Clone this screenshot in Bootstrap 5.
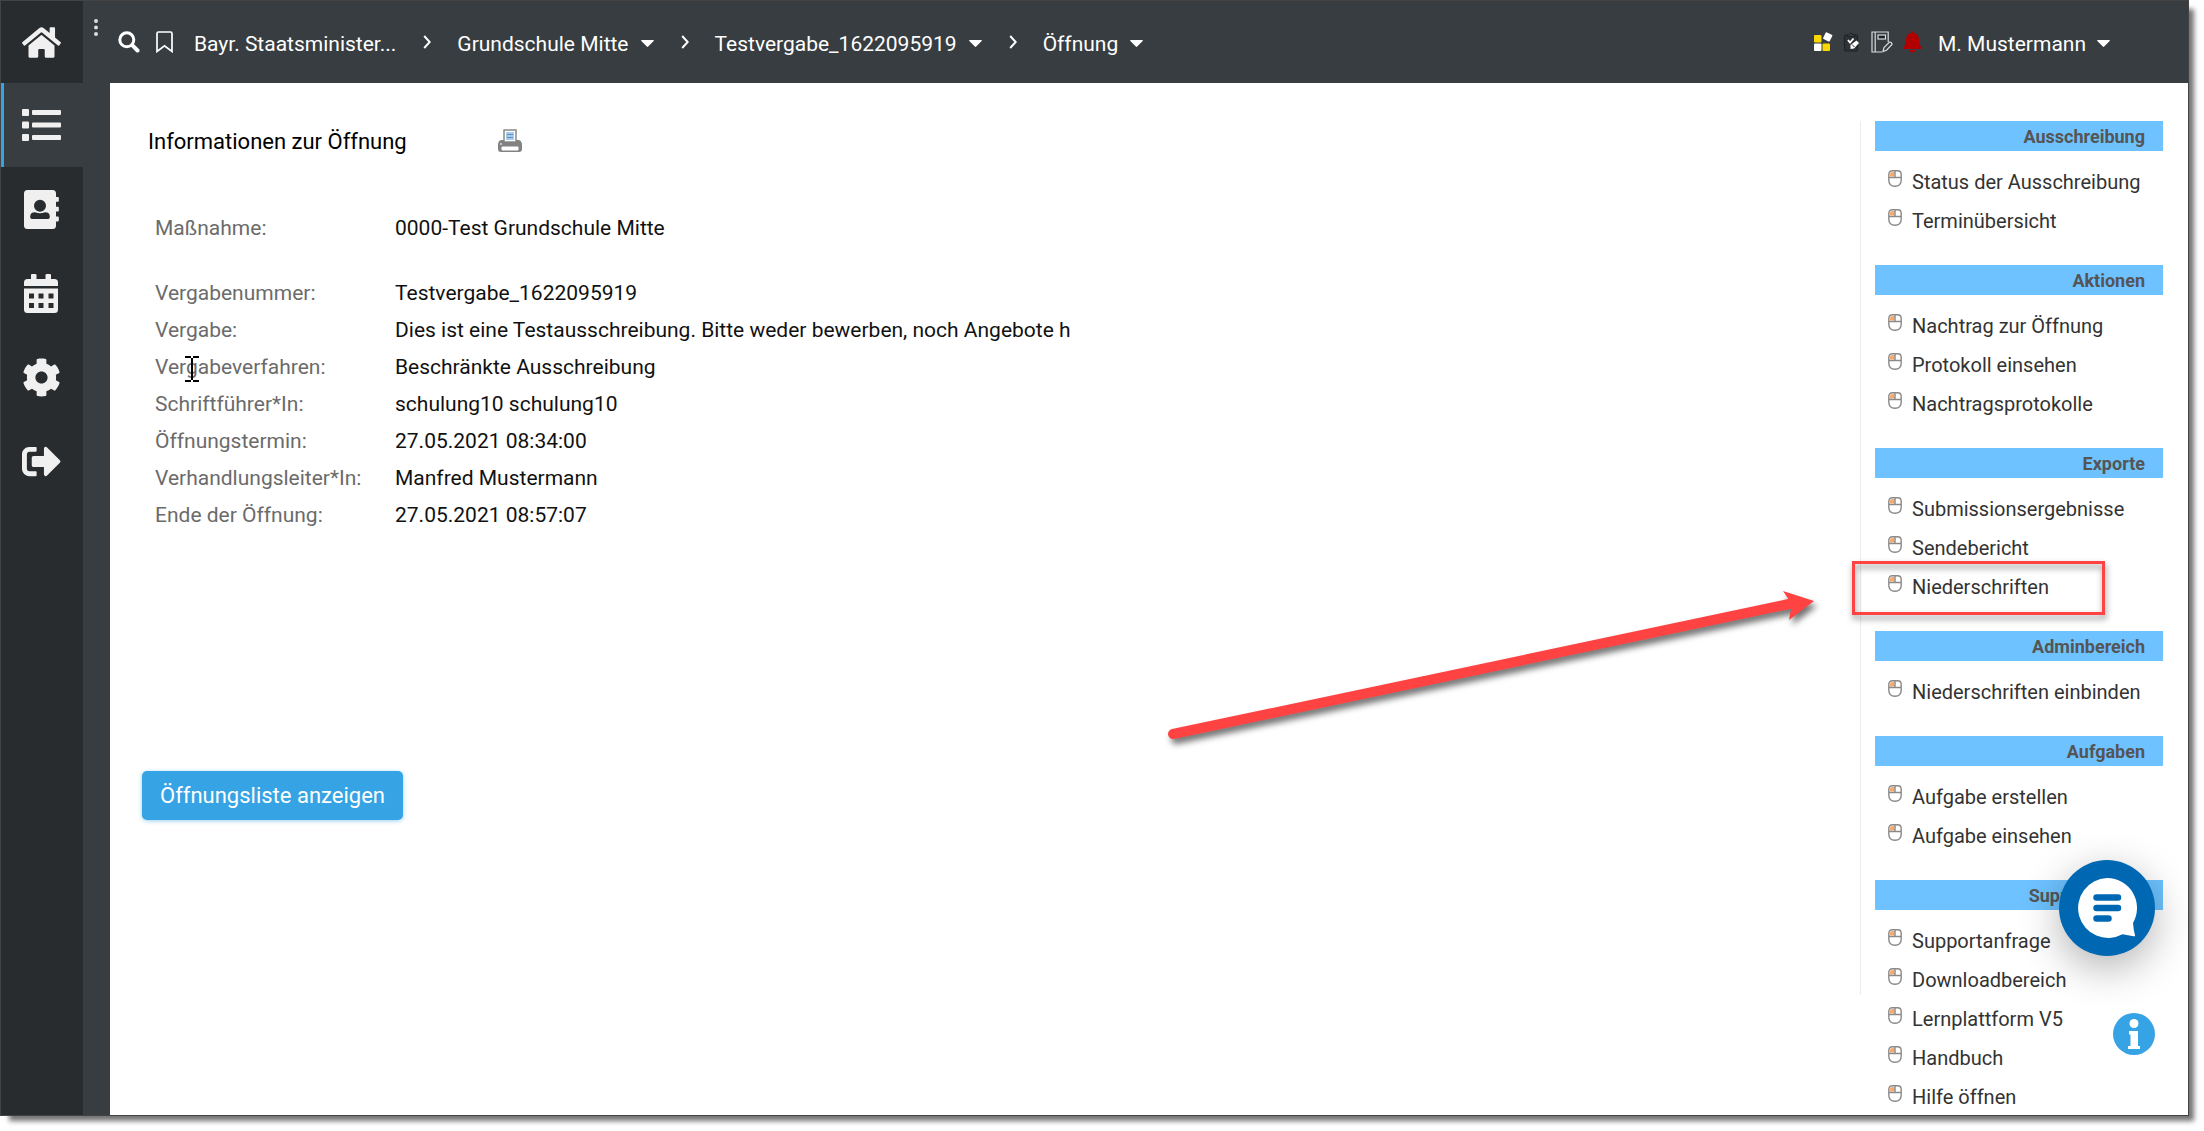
<!DOCTYPE html>
<html lang="de">
<head>
<meta charset="utf-8">
<meta name="viewport" content="width=device-width, initial-scale=1">
<title>Öffnung</title>
<link href="https://cdn.jsdelivr.net/npm/bootstrap@5.3.0/dist/css/bootstrap.min.css" rel="stylesheet">
<style>
  body { font-family: Roboto, "Liberation Sans", sans-serif; font-size: 21px; line-height: 25px; color: #111; background: #fff; padding: 0 15px 15px 0; overflow: hidden; }
  a { color: inherit; text-decoration: none; }
  svg { display: block; flex: none; }
  .app-frame { height: calc(100vh - 15px); border: 1px solid #434343; box-shadow: 7px 7px 5px -2px rgba(0,0,0,.55); background: #fff; overflow: hidden; }
  .side-nav { width: 82px; background: #282c2e; color: #f0f0f0; }
  .side-nav a { height: 84px; padding-right: 2px; }
  .side-nav a:first-child { height: 82px; }
  .side-nav a.is-current { background: #373d40; border-left: 3px solid #36a3e5; padding-right: 5px; }
  .side-gutter { width: 27px; background: #373d40; }
  .top-bar { height: 82px; background: #373d40; color: #fff; padding: 0 78px 0 11px; }
  .menu-dots { margin: 18px 20px 0 0; }
  .plain-btn { background: none; border: 0; padding: 0; color: inherit; font: inherit; }
  .crumb-nav { padding-left: 21px; }
  .crumb-sep { margin: 0 26px 0 27px; }
  .crumb-item { gap: 12px; padding-top: 5px; }
  .crumb-item svg { margin-bottom: 2px; }
  .user-menu { gap: 11px; }
  .tool-icons { gap: 10px; }
  .work-area { padding: 38px 25px 0 0; }
  .info-col { border-right: 1px solid #ececec; padding: 8px 0 175px 32px; }
  .info-title { font-size: 22px; line-height: 25px; font-weight: 400; color: #000; margin: 0; width: 350px; }
  .info-head { padding-left: 6px; margin-bottom: 56px; }
  .info-grid { display: grid; grid-template-columns: 240px 1fr; line-height: 37px; padding-left: 13px; margin: 0 0 237px; }
  .info-grid dt { font-weight: 400; color: #6b6b6b; }
  .info-grid dd { margin: 0; }
  .info-grid .gap-after { margin-bottom: 28px; }
  .list-btn { background: #36a3e5; color: #fff; border: 0; border-radius: 5px; font-size: 22px; line-height: 25px; padding: 12px 18px; box-shadow: 0 1px 4px rgba(54,163,229,.5); }
  .link-col { width: 288px; margin-left: 14px; }
  .group-title { background: #6dc2ff; color: #555; font-size: 18px; font-weight: 700; line-height: 28px; padding: 2px 18px 0 0; margin: 0; text-align: right; }
  .group-links { padding: 12px 0 24px 13px; margin: 0; font-size: 20px; line-height: 39px; color: #333; }
  .group-links a { gap: 10px; }
  .group-links svg { margin-top: 7px; }
  .highlight-box { left: -36px; top: -7px; width: 253px; height: 54px; border: 3px solid #ff4343; filter: drop-shadow(1px 4px 3px rgba(0,0,0,.45)); pointer-events: none; }
  .pointer-arrow { right: 369px; top: 579px; filter: drop-shadow(3px 5px 3px rgba(0,0,0,.55)); pointer-events: none; }
  .text-cursor { left: 30px; top: 7px; }
  .chat-btn { right: 33px; bottom: 159px; width: 96px; height: 96px; border-radius: 50%; background: #0068b3; box-shadow: 0 12px 40px rgba(0,0,0,.3); }
  .help-btn { right: 33px; bottom: 60px; }
</style>
<script src="https://cdn.jsdelivr.net/npm/bootstrap@5.3.0/dist/js/bootstrap.bundle.min.js"></script>
</head>
<body>
<svg width="0" height="0" class="position-absolute" aria-hidden="true">
  <symbol id="mouse" viewBox="0 0 14 17">
    <rect x="1" y="1" width="12" height="15" rx="5" ry="5" fill="#fff"/>
    <path d="M2 6.500V4Q2 2 4.500 2H6.500V6.500Z" fill="#f9a86c"/>
    <path d="M.8 4.500Q.8.8 4.500.8h5q3.700 0 3.700 3.700V10q0 6.200-6.200 6.200T.8 10ZM.8 7.500h12.400M7 .8v6.700" fill="none" stroke="#8a8a8a" stroke-width="1.400"/>
  </symbol>
  <symbol id="caret" viewBox="0 0 13 7"><path d="M.6 0h11.800q.8.200.3.900L7.200 6.600q-.7.700-1.400 0L.3.900Q-.2.200.6 0Z" fill="currentColor"/></symbol>
  <symbol id="chevron" viewBox="0 0 8 14"><path d="M1.200 1L6.700 7 1.200 13" fill="none" stroke="currentColor" stroke-width="2"/></symbol>
</svg>

<div class="app-frame position-relative d-flex">
  <nav class="side-nav d-flex flex-column flex-shrink-0" aria-label="Hauptnavigation">
    <a href="#" class="d-flex align-items-center justify-content-center" aria-label="Startseite"><svg width="39" height="35" viewBox="0 0 576 512" fill="currentColor"><path d="M280.370 148.260L96 300.110V464a16 16 0 0 0 16 16l112.060-.29a16 16 0 0 0 15.920-16V368a16 16 0 0 1 16-16h64a16 16 0 0 1 16 16v95.640a16 16 0 0 0 16 16.050L464 480a16 16 0 0 0 16-16V300L295.670 148.260a12.190 12.190 0 0 0-15.300 0zM571.600 251.470L488 182.560V44.050a12 12 0 0 0-12-12h-56a12 12 0 0 0-12 12v72.610L318.470 43a48 48 0 0 0-61 0L4.340 251.470a12 12 0 0 0-1.600 16.900l25.500 31A12 12 0 0 0 45.150 301l235.220-193.740a12.190 12.190 0 0 1 15.300 0L530.900 301a12 12 0 0 0 16.900-1.600l25.500-31a12 12 0 0 0-1.700-16.930z"/></svg></a>
    <a href="#" class="is-current d-flex align-items-center justify-content-center" aria-label="Liste"><svg width="39" height="32" viewBox="0 0 39 32" fill="currentColor"><rect width="7" height="7" rx="1"/><rect y="12.500" width="7" height="7" rx="1"/><rect y="25" width="7" height="7" rx="1"/><rect x="10" y="1" width="29" height="5" rx="1"/><rect x="10" y="13.500" width="29" height="5" rx="1"/><rect x="10" y="26" width="29" height="5" rx="1"/></svg></a>
    <a href="#" class="d-flex align-items-center justify-content-center" aria-label="Adressbuch"><svg width="35" height="39" viewBox="0 0 35 39" fill="currentColor"><path fill-rule="evenodd" d="M3.500 0H28.500Q32 0 32 3.500V7h2q.8 0 .8.800v3.200q0 .8-.8.800h-2v5h2q.8 0 .8.800v3.200q0 .8-.8.800h-2v5h2q.8 0 .8.800v3.200q0 .8-.8.800h-2V35.500Q32 39 28.500 39H3.500Q0 39 0 35.500V3.500Q0 0 3.500 0ZM16 9.700a6 6 0 1 0 0 12a6 6 0 1 0 0-12ZM11 22.200q-4.800 0-4.800 4.300v.8q0 1.700 1.700 1.700h16.200q1.700 0 1.700-1.700v-.8q0-4.300-4.800-4.300q-5 2-10 0Z"/></svg></a>
    <a href="#" class="d-flex align-items-center justify-content-center" aria-label="Kalender"><svg width="34" height="39" viewBox="0 0 34 39" fill="currentColor"><path fill-rule="evenodd" d="M0 12V8.500Q0 5 3.500 5H7V1q0-1 1-1h3.500q1 0 1 1V5h9V1q0-1 1-1H26q1 0 1 1V5h3.500Q34 5 34 8.500V12ZM0 14.500H34V35.500Q34 39 30.500 39H3.500Q0 39 0 35.500ZM5 19.500v5h5v-5ZM14.500 19.500v5h5v-5ZM24.500 19.500v5h5v-5ZM5 29v5h5v-5ZM14.500 29v5h5v-5ZM24.500 29v5h5v-5Z"/></svg></a>
    <a href="#" class="d-flex align-items-center justify-content-center" aria-label="Einstellungen"><svg width="39" height="39" viewBox="0 0 512 512" fill="currentColor"><path d="M487.400 315.700l-42.600-24.600c4.300-23.200 4.300-47 0-70.200l42.600-24.600c4.900-2.800 7.100-8.600 5.500-14-11.100-35.600-30-67.800-54.700-94.600-3.800-4.100-10-5.100-14.800-2.300L380.800 110c-17.900-15.400-38.500-27.300-60.800-35.100V25.800c0-5.600-3.900-10.500-9.400-11.700-36.700-8.200-74.300-7.800-109.200 0-5.500 1.200-9.400 6.100-9.400 11.700V75c-22.200 7.900-42.800 19.800-60.800 35.100L88.700 85.500c-4.900-2.800-11-1.900-14.800 2.300-24.700 26.700-43.600 58.900-54.700 94.600-1.700 5.400.6 11.200 5.500 14L67.300 221c-4.300 23.200-4.300 47 0 70.200l-42.600 24.600c-4.900 2.800-7.100 8.600-5.500 14 11.100 35.600 30 67.800 54.700 94.600 3.800 4.100 10 5.100 14.800 2.300l42.600-24.600c17.900 15.400 38.500 27.300 60.800 35.100v49.200c0 5.600 3.900 10.500 9.400 11.700 36.700 8.200 74.300 7.800 109.200 0 5.500-1.200 9.400-6.100 9.400-11.700v-49.200c22.200-7.900 42.800-19.800 60.800-35.100l42.600 24.600c4.900 2.800 11 1.900 14.800-2.300 24.700-26.700 43.600-58.900 54.700-94.600 1.500-5.500-.7-11.300-5.600-14.100zM256 336c-44.100 0-80-35.900-80-80s35.900-80 80-80 80 35.900 80 80-35.900 80-80 80z"/></svg></a>
    <a href="#" class="d-flex align-items-center justify-content-center" aria-label="Abmelden"><svg width="39" height="39" viewBox="0 0 512 512" fill="currentColor"><path d="M497 273L329 441c-15 15-41 4.500-41-17v-96H152c-13.300 0-24-10.700-24-24v-96c0-13.300 10.700-24 24-24h136V88c0-21.400 25.900-32 41-17l168 168c9.300 9.400 9.300 24.600 0 34zM192 436v-40c0-6.600-5.400-12-12-12H96c-17.700 0-32-14.300-32-32V160c0-17.700 14.300-32 32-32h84c6.600 0 12-5.400 12-12V76c0-6.600-5.400-12-12-12H96c-53 0-96 43-96 96v192c0 53 43 96 96 96h84c6.600 0 12-5.400 12-12z"/></svg></a>
  </nav>

  <div class="d-flex flex-column flex-grow-1">
    <header class="top-bar d-flex align-items-center flex-shrink-0">
      <button type="button" class="plain-btn menu-dots align-self-start" aria-label="Menü"><svg width="4" height="17" viewBox="0 0 4 17" fill="#ddd"><circle cx="2" cy="2" r="2"/><circle cx="2" cy="8.500" r="2"/><circle cx="2" cy="15" r="2"/></svg></button>
      <button type="button" class="plain-btn" aria-label="Suche"><svg width="22" height="22" viewBox="0 0 22 22" fill="none" stroke="currentColor"><circle cx="8.800" cy="8.800" r="7" stroke-width="3"/><path d="M14.200 14.200L19.500 19.500" stroke-width="4" stroke-linecap="round"/></svg></button>
      <a href="#" class="ms-3" aria-label="Lesezeichen"><svg width="17" height="22" viewBox="0 0 17 22" fill="none" stroke="currentColor" stroke-width="1.700"><path d="M1 2.500Q1 1 2.500 1H14.500Q16 1 16 2.500V20.500L8.500 14.800L1 20.500Z"/></svg></a>
      <nav class="crumb-nav d-flex align-items-center" aria-label="Pfad">
        <a href="#" class="crumb-item d-flex align-items-center">Bayr. Staatsminister...</a>
        <svg class="crumb-sep" width="8" height="14"><use href="#chevron"/></svg>
        <button type="button" class="plain-btn crumb-item d-flex align-items-center">Grundschule Mitte <svg width="13" height="7"><use href="#caret"/></svg></button>
        <svg class="crumb-sep" width="8" height="14"><use href="#chevron"/></svg>
        <button type="button" class="plain-btn crumb-item d-flex align-items-center">Testvergabe_1622095919 <svg width="13" height="7"><use href="#caret"/></svg></button>
        <svg class="crumb-sep" width="8" height="14"><use href="#chevron"/></svg>
        <button type="button" class="plain-btn crumb-item d-flex align-items-center">Öffnung <svg width="13" height="7"><use href="#caret"/></svg></button>
      </nav>
      <div class="tool-icons d-flex align-items-center ms-auto me-3">
        <a href="#" aria-label="Anwendungen"><svg width="20" height="20" viewBox="0 0 20 20"><rect x="1" y="3" width="7.500" height="7.500" rx="1" fill="#f8d800"/><rect x="1" y="11.500" width="7.500" height="7.500" rx="1" fill="#fff"/><rect x="9.500" y="11.500" width="7.500" height="7.500" rx="1" fill="#f8d800"/><rect x="11" y="1.200" width="7.400" height="7.400" rx="1" fill="#fff" transform="rotate(27 14.700 4.900)"/></svg></a>
        <a href="#" aria-label="Prüfungen"><svg width="18" height="20" viewBox="0 0 18 20"><path d="M3 3h10q1.500 0 1.500 1.500v13q0 1.500-1.500 1.500H3q-1.500 0-1.500-1.500v-13Q1.500 3 3 3Z" fill="#2d3235" stroke="#1f2325" stroke-width="1.200"/><path d="M4.500 4.500V2.500H6.200Q8 -.5 9.800 2.500H11.500V4.500Z" fill="#373d40" stroke="#1f2325"/><path d="M5 8l2 2.500 3.500-4" fill="none" stroke="#fff" stroke-width="1.800"/><path d="M7.500 13L13.500 8.500l2.500 2.500-5 5.500-3.500.5Z" fill="#fff"/><path d="M9 12.500l2.500 2.500" stroke="#1f2325" stroke-width="1"/></svg></a>
        <a href="#" aria-label="Notizbuch"><svg width="22" height="22" viewBox="0 0 22 22" fill="none" stroke="#d8dcde" stroke-width="1.200"><path d="M17.200 11V1H1V21h10M4.200 1V21"/><rect x="7" y="4" width="7.500" height="4" fill="#1f2325"/><path d="M12 20.500l1-4 5.500-5.500q2.500 0 2.500 2.500l-5.500 5.700Z"/></svg></a>
        <a href="#" aria-label="Meldungen"><svg width="19" height="22" viewBox="0 0 19 22" fill="#b20000"><path d="M9.500 0q1.300 0 1.300 1.800Q16 3 16 9q0 5 2.300 7 1.200 1.500-.3 2H1q-1.500-.5-.3-2Q3 14 3 9q0-6 5.200-7.200Q8.200 0 9.500 0ZM6.500 19h6q-.5 2.500-3 2.500t-3-2.500Z"/></svg></a>
      </div>
      <button type="button" class="plain-btn crumb-item user-menu d-flex align-items-center">M. Mustermann <svg width="13" height="7"><use href="#caret"/></svg></button>
    </header>

    <div class="d-flex flex-grow-1">
      <div class="side-gutter flex-shrink-0"></div>
      <main class="work-area d-flex align-items-start flex-grow-1">
        <section class="info-col flex-grow-1">
          <div class="info-head d-flex align-items-start">
            <h1 class="info-title">Informationen zur Öffnung</h1>
            <button type="button" class="plain-btn" aria-label="Drucken"><svg width="24" height="24" viewBox="0 0 24 24"><path d="M6 1h12v12H6Z" fill="#fff" stroke="#8b8b8b" stroke-width="1.500"/><path d="M8 3h8v8H8Z" fill="#a9cbee"/><path d="M9 5.500h6M9 8.500h6" stroke="#5b8fc4"/><path d="M3 11h3v2h12v-2h3q3 1 3 5v4q0 3-3 3H3q-3 0-3-3v-4q0-4 3-5Z" fill="#828282"/><rect x="3.500" y="17.500" width="17" height="4" rx="1" fill="#fff"/><circle cx="3" cy="15" r="1" fill="#ddd"/></svg></button>
          </div>
          <dl class="info-grid">
            <dt class="gap-after">Maßnahme:</dt><dd>0000-Test Grundschule Mitte</dd>
            <dt>Vergabenummer:</dt><dd>Testvergabe_1622095919</dd>
            <dt>Vergabe:</dt><dd>Dies ist eine Testausschreibung. Bitte weder bewerben, noch Angebote h</dd>
            <dt class="position-relative">Vergabeverfahren:<svg class="text-cursor position-absolute" width="14" height="26" viewBox="0 0 14 26" fill="none" stroke="#000" stroke-width="2"><path d="M0 1H6M8 1H14M0 25H6M8 25H14M7 2V24"/></svg></dt><dd>Beschränkte Ausschreibung</dd>
            <dt>Schriftführer*In:</dt><dd>schulung10 schulung10</dd>
            <dt>Öffnungstermin:</dt><dd>27.05.2021 08:34:00</dd>
            <dt>Verhandlungsleiter*In:</dt><dd>Manfred Mustermann</dd>
            <dt>Ende der Öffnung:</dt><dd>27.05.2021 08:57:07</dd>
          </dl>
          <button type="button" class="list-btn">Öffnungsliste anzeigen</button>
        </section>

        <aside class="link-col flex-shrink-0">
          <h2 class="group-title">Ausschreibung</h2>
          <ul class="group-links list-unstyled">
            <li><a href="#" class="d-flex align-items-start"><svg width="14" height="17"><use href="#mouse"/></svg>Status der Ausschreibung</a></li>
            <li><a href="#" class="d-flex align-items-start"><svg width="14" height="17"><use href="#mouse"/></svg>Terminübersicht</a></li>
          </ul>
          <h2 class="group-title">Aktionen</h2>
          <ul class="group-links list-unstyled">
            <li><a href="#" class="d-flex align-items-start"><svg width="14" height="17"><use href="#mouse"/></svg>Nachtrag zur Öffnung</a></li>
            <li><a href="#" class="d-flex align-items-start"><svg width="14" height="17"><use href="#mouse"/></svg>Protokoll einsehen</a></li>
            <li><a href="#" class="d-flex align-items-start"><svg width="14" height="17"><use href="#mouse"/></svg>Nachtragsprotokolle</a></li>
          </ul>
          <h2 class="group-title">Exporte</h2>
          <ul class="group-links list-unstyled">
            <li><a href="#" class="d-flex align-items-start"><svg width="14" height="17"><use href="#mouse"/></svg>Submissionsergebnisse</a></li>
            <li><a href="#" class="d-flex align-items-start"><svg width="14" height="17"><use href="#mouse"/></svg>Sendebericht</a></li>
            <li class="position-relative"><a href="#" class="d-flex align-items-start"><svg width="14" height="17"><use href="#mouse"/></svg>Niederschriften</a><span class="highlight-box position-absolute"></span></li>
          </ul>
          <h2 class="group-title">Adminbereich</h2>
          <ul class="group-links list-unstyled">
            <li><a href="#" class="d-flex align-items-start"><svg width="14" height="17"><use href="#mouse"/></svg>Niederschriften einbinden</a></li>
          </ul>
          <h2 class="group-title">Aufgaben</h2>
          <ul class="group-links list-unstyled">
            <li><a href="#" class="d-flex align-items-start"><svg width="14" height="17"><use href="#mouse"/></svg>Aufgabe erstellen</a></li>
            <li><a href="#" class="d-flex align-items-start"><svg width="14" height="17"><use href="#mouse"/></svg>Aufgabe einsehen</a></li>
          </ul>
          <h2 class="group-title">Supportcenter</h2>
          <ul class="group-links list-unstyled">
            <li><a href="#" class="d-flex align-items-start"><svg width="14" height="17"><use href="#mouse"/></svg>Supportanfrage</a></li>
            <li><a href="#" class="d-flex align-items-start"><svg width="14" height="17"><use href="#mouse"/></svg>Downloadbereich</a></li>
            <li><a href="#" class="d-flex align-items-start"><svg width="14" height="17"><use href="#mouse"/></svg>Lernplattform V5</a></li>
            <li><a href="#" class="d-flex align-items-start"><svg width="14" height="17"><use href="#mouse"/></svg>Handbuch</a></li>
            <li><a href="#" class="d-flex align-items-start"><svg width="14" height="17"><use href="#mouse"/></svg>Hilfe öffnen</a></li>
          </ul>
        </aside>
      </main>
    </div>
  </div>

  <svg class="pointer-arrow position-absolute" width="658" height="170" viewBox="0 0 658 170"><path d="M12 154L628 24" stroke="#ff4343" stroke-width="10" stroke-linecap="round"/><path d="M653 21L622 11L628 20L630 29L628 40Z" fill="#ff4343"/></svg>

  <button type="button" class="plain-btn chat-btn position-absolute d-flex align-items-center justify-content-center" aria-label="Chat"><svg width="60" height="60" viewBox="0 0 60 60"><path d="M30 0A30 30 0 0 1 56 45Q56.500 52 58 57Q58.300 58.500 56.500 58.200L45.500 56.300A30 30 0 1 1 30 0Z" fill="#fff"/><path d="M19.500 19.500H41M19.500 30H41M19.500 40.500H31.500" stroke="#0068b3" stroke-width="6.500" stroke-linecap="round"/></svg></button>
  <button type="button" class="plain-btn help-btn position-absolute" aria-label="Hilfe"><svg width="42" height="42" viewBox="0 0 42 42"><circle cx="21" cy="21" r="21" fill="#36a3e5"/><circle cx="21" cy="10.500" r="4.500" fill="#fff"/><path d="M16 18h9v15h2v3H15v-3h2.500V21.500H16Z" fill="#fff"/></svg></button>
</div>
</body>
</html>
